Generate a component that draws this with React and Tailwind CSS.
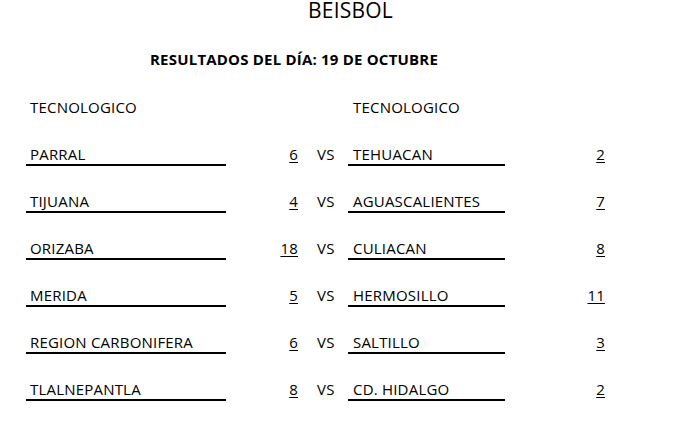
const games = [
  ['PARRAL', '6', 'TEHUACAN', '2'],
  ['TIJUANA', '4', 'AGUASCALIENTES', '7'],
  ['ORIZABA', '18', 'CULIACAN', '8'],
  ['MERIDA', '5', 'HERMOSILLO', '11'],
  ['REGION CARBONIFERA', '6', 'SALTILLO', '3'],
  ['TLALNEPANTLA', '8', 'CD. HIDALGO', '2'],
]

function Row({ left, leftScore, right, rightScore, header }) {
  const line = header ? 'border-transparent' : 'border-black'
  return (
    <div className="flex h-[47px] items-end">
      <div className={`ml-[26px] w-[200px] border-b-2 ${line} pl-1 leading-[20px]`}>{left}</div>
      <div className="w-[72px] pb-[2px] text-right leading-[20px]">
        <span className="underline underline-offset-2">{leftScore}</span>
      </div>
      <div className="w-[50px] pb-[2px] pl-[19px] leading-[20px]">{header ? '' : 'VS'}</div>
      <div className={`w-[157px] border-b-2 ${line} pl-[5px] leading-[20px]`}>{right}</div>
      <div className="w-[100px] pb-[2px] text-right leading-[20px]">
        <span className="underline underline-offset-2">{rightScore}</span>
      </div>
    </div>
  )
}

export default function App() {
  return (
    <div className="h-[421px] w-[683px] overflow-hidden bg-white text-[15px] tracking-[0.2px] text-black" style={{ fontFamily: '"Open Sans", sans-serif' }}>
      <div className="-mt-[2px] h-[24px] pl-[308px] text-[21px] leading-[24px]">BEISBOL</div>
      <div className="mt-[27px] pl-[150px] font-bold leading-[20px]">RESULTADOS DEL DÍA: 19 DE OCTUBRE</div>
      <div className="mt-[3px]">
        <Row header left="TECNOLOGICO" right="TECNOLOGICO" />
        {games.map(g => (
          <Row key={g[0]} left={g[0]} leftScore={g[1]} right={g[2]} rightScore={g[3]} />
        ))}
      </div>
    </div>
  )
}
